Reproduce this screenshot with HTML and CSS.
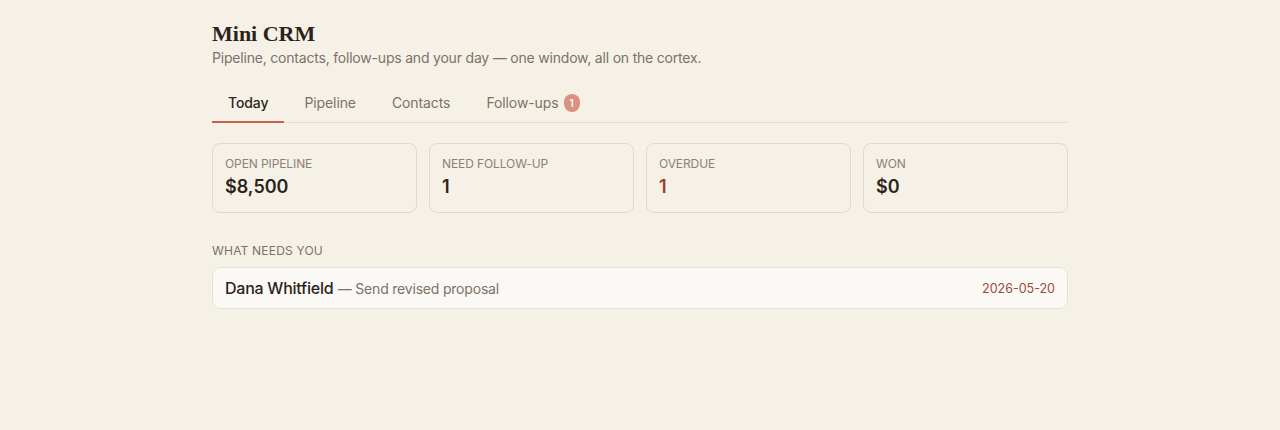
FILE: index.html
```html
<!DOCTYPE html>
<html lang="en">
<head>
    <meta charset="UTF-8">
    <meta name="viewport" content="width=device-width, initial-scale=1.0">
    <title>Mini CRM</title>
    <link rel="stylesheet" href="styles.css">
</head>
<body>

    <div class="app">
        <header class="head">
            <h1>Mini CRM</h1>
            <p class="sub">Pipeline, contacts, follow-ups and your day — one window, all on the cortex.</p>
        </header>

        <nav class="tabs">
            <a class="tab active">Today</a>
            <a class="tab">Pipeline</a>
            <a class="tab">Contacts</a>
            <a class="tab">Follow-ups <span class="badge">1</span></a>
        </nav>

        <section class="stats">
            <div class="stat">
                <div class="stat-label">Open pipeline</div>
                <div class="stat-value">$8,500</div>
            </div>
            <div class="stat">
                <div class="stat-label">Need follow-up</div>
                <div class="stat-value">1</div>
            </div>
            <div class="stat">
                <div class="stat-label">Overdue</div>
                <div class="stat-value warn">1</div>
            </div>
            <div class="stat">
                <div class="stat-label">Won</div>
                <div class="stat-value">$0</div>
            </div>
        </section>

        <h3 class="section-title">What needs you</h3>
        <div class="todo">
            <div class="todo-main">
                <span class="who">Dana Whitfield</span>
                <span class="what">— Send revised proposal</span>
            </div>
            <span class="due">2026-05-20</span>
        </div>
    </div>

</body>
</html>
```

FILE: styles.css
```css
/* base */
* {
    margin: 0;
    padding: 0;
    box-sizing: border-box;
}

body {
    background: #f6f1e7;
    color: #2b2620;
    font-family: 'Inter', 'Liberation Sans', sans-serif;
}

.app {
    max-width: 856px;
    margin: 0 auto;
    padding-top: 20px;
}

/* header */
.head h1 {
    font-family: 'Liberation Serif', serif;
    font-size: 22px;
    font-weight: bold;
    color: #2a241d;
    line-height: 28px;
}

.sub {
    font-size: 14px;
    letter-spacing: -0.2px;
    color: #7b7269;
    line-height: 20px;
}

/* tabs */
.tabs {
    display: flex;
    gap: 4px;
    margin-top: 16px;
    border-bottom: 1px solid #e2dcd1;
}

.tab {
    display: flex;
    align-items: center;
    gap: 5px;
    padding: 0 16px;
    height: 39px;
    font-size: 14px;
    letter-spacing: -0.1px;
    color: #7b7269;
    border-bottom: 2px solid transparent;
    margin-bottom: -1px;
    cursor: pointer;
}

.tab.active {
    color: #2b2620;
    font-weight: 500;
    border-bottom-color: #c9604c;
}

.badge {
    display: inline-flex;
    align-items: center;
    justify-content: center;
    width: 16px;
    height: 18px;
    border-radius: 9px;
    background: #db9082;
    color: #fff;
    font-size: 10px;
    font-weight: 600;
    letter-spacing: 0;
}

/* stat cards */
.stats {
    display: grid;
    grid-template-columns: repeat(4, 1fr);
    gap: 12px;
    margin-top: 20px;
}

.stat {
    border: 1px solid #e0d9cd;
    border-radius: 8px;
    padding: 12px 12px 14px;
    height: 70px;
}

.stat-label {
    font-size: 12px;
    letter-spacing: -0.1px;
    text-transform: uppercase;
    color: #8a8178;
    line-height: 16px;
}

.stat-value {
    font-size: 18px;
    font-weight: 600;
    color: #2a241d;
    margin-top: 4px;
    line-height: 22px;
}

.stat-value.warn {
    color: #9c3b2f;
}

/* to-do list */
.section-title {
    font-size: 12px;
    font-weight: 400;
    text-transform: uppercase;
    letter-spacing: 0.2px;
    color: #7b7269;
    margin-top: 30px;
    line-height: 16px;
}

.todo {
    display: flex;
    align-items: center;
    justify-content: space-between;
    margin-top: 8px;
    height: 42px;
    padding: 0 12px;
    background: #fbf9f5;
    border: 1px solid #e6e0d6;
    border-radius: 8px;
}

.who {
    font-size: 16px;
    font-weight: 500;
    letter-spacing: -0.25px;
    color: #2a241d;
}

.what {
    font-size: 14px;
    letter-spacing: -0.2px;
    color: #7b7269;
}

.due {
    font-size: 12.5px;
    color: #9c4a3e;
}
```
